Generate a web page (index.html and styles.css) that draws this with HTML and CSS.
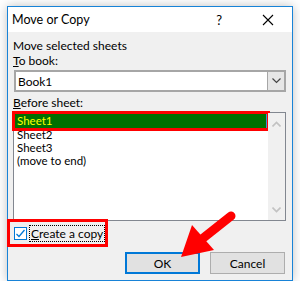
FILE: index.html
```html
<!DOCTYPE html>
<html lang="en">
<head>
  <meta charset="UTF-8">
  <title>Move or Copy</title>
  <link rel="stylesheet" href="styles.css">
</head>
<body>

<div class="dialog">
  <!-- Title bar -->
  <div class="titlebar">
    <span class="title">Move or Copy</span>
    <span class="help">?</span>
    <svg class="close" width="12" height="12" viewBox="0 0 12 12">
      <path d="M1 1 L11 11 M11 1 L1 11" stroke="#000" stroke-width="1.1" fill="none"/>
    </svg>
  </div>

  <div class="content">
    <div class="label">Move selected sheets</div>
    <div class="label"><u>T</u>o book:</div>

    <div class="combo">
      <span class="combo-text">Book1</span>
      <span class="combo-btn">
        <svg width="9" height="6" viewBox="0 0 9 6"><path d="M0.5 0.5 L4.5 4.5 L8.5 0.5" stroke="#444" stroke-width="1.2" fill="none"/></svg>
      </span>
    </div>

    <div class="label label-gap"><u>B</u>efore sheet:</div>

    <div class="listbox">
      <ul class="items">
        <li class="item selected">Sheet1</li>
        <li class="item">Sheet2</li>
        <li class="item">Sheet3</li>
        <li class="item">(move to end)</li>
      </ul>
      <div class="scrollbar">
        <svg width="9" height="6" viewBox="0 0 9 6"><path d="M0.5 5.5 L4.5 1.5 L8.5 5.5" stroke="#c2c2c2" stroke-width="1.6" fill="none"/></svg>
        <svg width="9" height="6" viewBox="0 0 9 6"><path d="M0.5 0.5 L4.5 4.5 L8.5 0.5" stroke="#c2c2c2" stroke-width="1.6" fill="none"/></svg>
      </div>
    </div>

    <div class="copy-row">
      <span class="checkbox">
        <svg width="11" height="11" viewBox="0 0 11 11"><path d="M1.5 6 L4 8.5 L9.5 2" stroke="#0078d7" stroke-width="1.3" fill="none"/></svg>
      </span>
      <span class="copy-label"><u>C</u>reate a copy</span>
    </div>

    <div class="buttons">
      <button class="btn btn-default">OK</button>
      <button class="btn">Cancel</button>
    </div>
  </div>
</div>

<!-- Red annotation arrow -->
<svg class="arrow" width="300" height="289" viewBox="0 0 300 289">
  <line x1="231" y1="216" x2="202" y2="239" stroke="#f00" stroke-width="9" stroke-linecap="round"/>
  <polygon points="181,257 192,225 214,250" fill="#f00"/>
</svg>

</body>
</html>
```

FILE: styles.css
```css
body {
  margin: 0;
  background-color: #fff;
  font-family: Lato, "Noto Sans", sans-serif;
  font-size: 12px;
  color: #000;
}

.dialog {
  position: relative;
  margin: 6px 0 0 7px;
  width: 284px;
  height: 273px;
  border: 1px solid #1883d7;
  background-color: #f0f0f0;
  box-shadow: 0 0 10px rgba(0, 0, 0, 0.25);
  display: flex;
  flex-direction: column;
}

.titlebar {
  height: 25px;
  background-color: #fff;
  display: flex;
  align-items: center;
}

.title {
  font-size: 12.5px;
  margin-left: 4px;
  flex: 1;
}

.help {
  font-size: 13px;
  margin-right: 40px;
}

.close {
  margin-right: 18px;
}

.content {
  padding: 6px 6px 0 5px;
}

.label {
  line-height: 15px;
}

.label-gap {
  margin-top: 3px;
}

.combo {
  margin: 2px 0 0 1px;
  height: 18px;
  border: 2px solid #a6a6a6;
  background-color: #fff;
  display: flex;
  align-items: center;
}

.combo-text {
  flex: 1;
  padding-left: 2px;
}

.combo-btn {
  width: 16px;
  height: 18px;
  background-color: #e6e6e6;
  border-left: 1px solid #a6a6a6;
  display: flex;
  align-items: center;
  justify-content: center;
}

.listbox {
  margin-top: 2px;
  height: 107px;
  border: 1px solid #828790;
  background-color: #fff;
  display: flex;
}

.items {
  list-style: none;
  margin: 0;
  padding: 1px 1px 0 1px;
  flex: 1;
  font-size: 11.5px;
}

.item {
  height: 13px;
  line-height: 13px;
  padding-left: 2px;
}

.item.selected {
  background-color: #007000;
  color: #ffff00;
  height: 14px;
  line-height: 14px;
  border-right: 1px solid #3c8fd8;
  outline: 3px solid #f00;
}

.scrollbar {
  width: 17px;
  background-color: #f0f0f0;
  display: flex;
  flex-direction: column;
  justify-content: space-between;
  align-items: center;
  padding: 8px 0 7px;
}

.copy-row {
  margin: -2px 0 0 -6px;
  width: 95px;
  height: 22px;
  border: 3px solid #f00;
  display: flex;
  align-items: center;
}

.checkbox {
  margin-left: 4px;
  width: 11px;
  height: 11px;
  border: 1px solid #0078d7;
  background-color: #fff;
  display: flex;
}

.copy-label {
  margin-left: 3px;
  padding: 0 1px;
  line-height: 15px;
  white-space: nowrap;
  outline: 1px dotted #000;
}

.buttons {
  margin-top: 5px;
  display: flex;
  justify-content: flex-end;
  gap: 10px;
  padding-right: 1px;
}

.btn {
  width: 75px;
  height: 22px;
  font-family: inherit;
  font-size: 12px;
  background-color: #e1e1e1;
  border: 1px solid #adadad;
  padding: 0;
}

.btn-default {
  border: 2px solid #0078d7;
}

.arrow {
  position: absolute;
  left: 0;
  top: 0;
}
```
